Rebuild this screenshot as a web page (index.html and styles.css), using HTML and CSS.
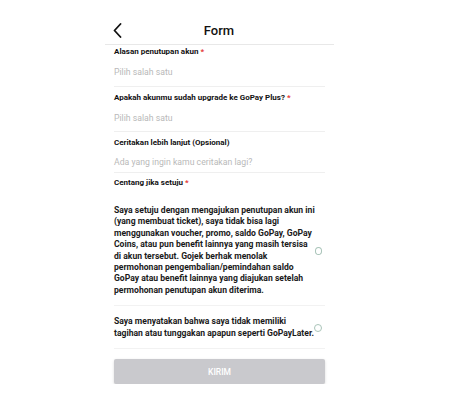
FILE: index.html
```html
<!DOCTYPE html>
<html>
<head>
  <title>Form</title>
  <meta name="viewport" content="width=device-width, initial-scale=1">
  <link rel="stylesheet" href="styles.css">
</head>
<body>

  <div class="page">
    <div class="header">
      <svg class="back" width="9" height="15" viewBox="0 0 9 15">
        <path d="M7.5 1 L1.5 7.5 L7.5 14" fill="none" stroke="#111" stroke-width="1.8" stroke-linecap="round" stroke-linejoin="round"/>
      </svg>
      <div class="title">Form</div>
    </div>

    <div class="form">
      <div class="field f1">
        <div class="label">Alasan penutupan akun <span class="req">*</span></div>
        <div class="placeholder">Pilih salah satu</div>
      </div>
      <div class="field f2">
        <div class="label">Apakah akunmu sudah upgrade ke GoPay Plus? <span class="req">*</span></div>
        <div class="placeholder">Pilih salah satu</div>
      </div>
      <div class="field f3">
        <div class="label">Ceritakan lebih lanjut (Opsional)</div>
        <div class="placeholder">Ada yang ingin kamu ceritakan lagi?</div>
      </div>

      <div class="label centang">Centang jika setuju <span class="req">*</span></div>

      <div class="check c1">
        <div class="check-text">Saya setuju dengan mengajukan penutupan akun ini<br>
          (yang membuat ticket), saya tidak bisa lagi<br>
          menggunakan voucher, promo, saldo GoPay, GoPay<br>
          Coins, atau pun benefit lainnya yang masih tersisa<br>
          di akun tersebut. Gojek berhak menolak<br>
          permohonan pengembalian/pemindahan saldo<br>
          GoPay atau benefit lainnya yang diajukan setelah<br>
          permohonan penutupan akun diterima.</div>
        <div class="radio"></div>
      </div>
      <div class="check c2">
        <div class="check-text">Saya menyatakan bahwa saya tidak memiliki<br>
          tagihan atau tunggakan apapun seperti GoPayLater.</div>
        <div class="radio"></div>
      </div>

      <button class="kirim">KIRIM</button>
    </div>
  </div>

</body>
</html>
```

FILE: styles.css
```css
body {
  font-family: Roboto, "Noto Sans", sans-serif;
  background-color: #fff;
  color: #1c1c1c;
  margin: 0;
}
.page {
  width: 229px;
  margin-left: 105px;
}
.header {
  height: 44px;
  border-bottom: 1px solid #e8e8e8;
  display: flex;
  align-items: center;
  justify-content: center;
  position: relative;
}
.back {
  position: absolute;
  left: 8px;
  top: 23px;
}
.title {
  font-size: 13px;
  font-weight: 500;
  color: #111;
  margin-top: 16px;
  margin-left: -1px;
}
.form {
  padding: 0 9px;
}
.label {
  font-size: 8px;
  font-weight: 700;
  line-height: 12px;
  color: #111;
}
.req {
  color: #e53935;
}
.placeholder {
  font-size: 8.7px;
  line-height: 14px;
  color: #b9b9b9;
}
.field {
  border-bottom: 1px solid #efefef;
}
.f1 {
  padding: 1px 0 7px;
}
.f1 .placeholder, .f2 .placeholder {
  margin-top: 7px;
}
.f2 {
  padding: 5px 0 6px;
}
.f3 {
  padding: 5px 0 3px;
}
.f3 .placeholder {
  margin-top: 6px;
}
.centang {
  padding-top: 4px;
}
.check {
  display: flex;
  align-items: center;
  justify-content: space-between;
  border-bottom: 1px solid #f2f2f2;
}
.c1 {
  margin-top: 16px;
  padding-bottom: 9px;
}
.c2 {
  padding: 10px 0 9px;
}
.check-text {
  white-space: nowrap;
  font-size: 8.6px;
  font-weight: 700;
  line-height: 11.4px;
  color: #1a1a1a;
}
.radio {
  width: 6px;
  height: 6px;
  border: 1px solid #a9c4b9;
  border-radius: 50%;
  margin-right: 3px;
}
.kirim {
  display: block;
  width: 100%;
  height: 25px;
  margin-top: 10px;
  border: none;
  border-radius: 2px;
  background-color: #c9c9cd;
  color: #fff;
  font-family: Roboto, sans-serif;
  font-size: 8.5px;
  font-weight: 500;
  box-shadow: 0 1px 3px rgba(0,0,0,0.15);
}
```
